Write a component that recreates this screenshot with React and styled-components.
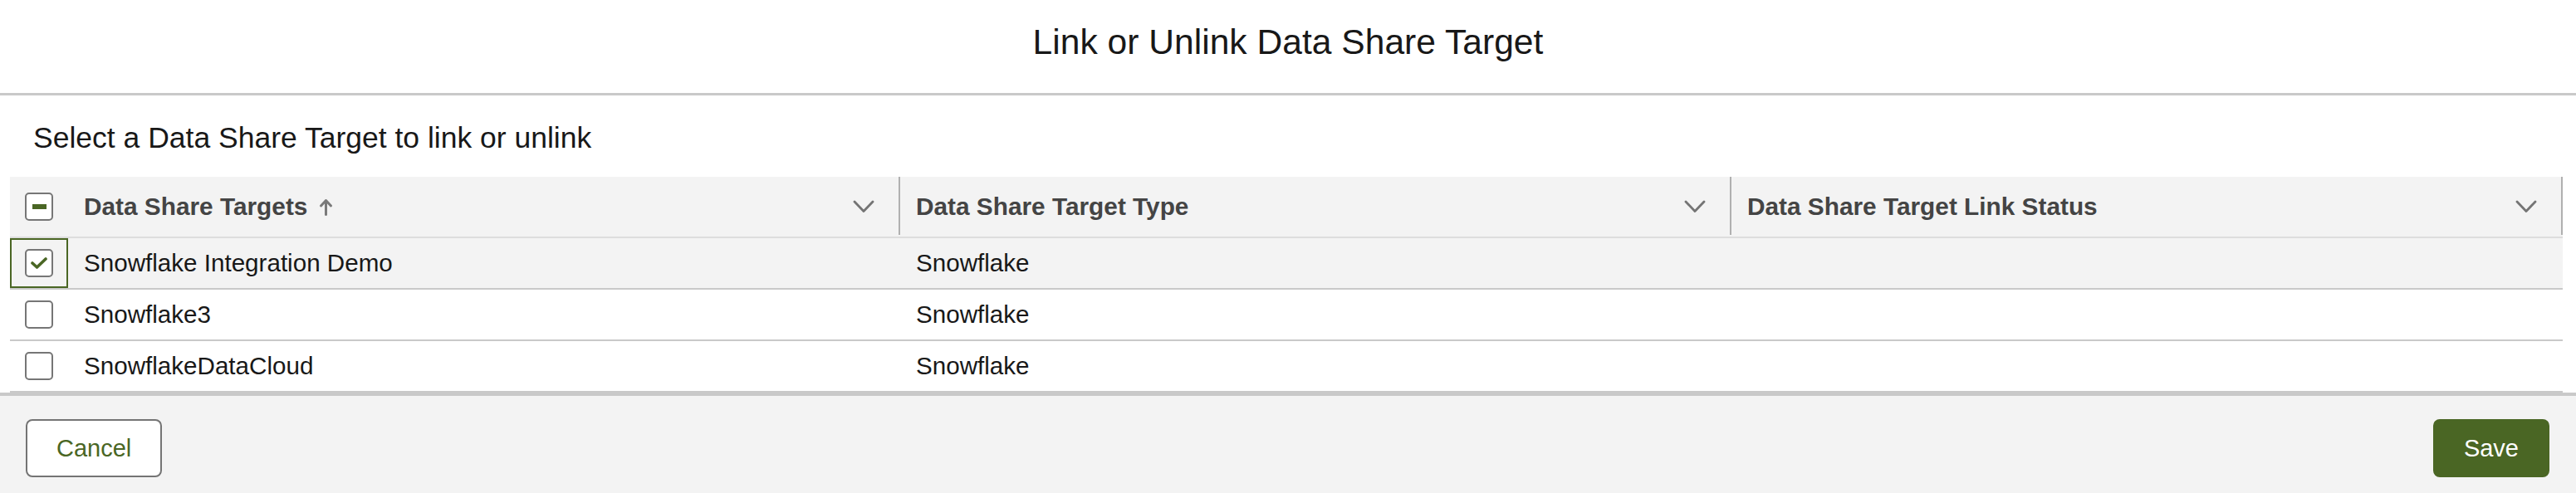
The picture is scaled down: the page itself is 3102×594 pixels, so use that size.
import React from "react";
import styled, { createGlobalStyle } from "styled-components";

const GlobalStyle = createGlobalStyle`
  html, body { margin: 0; padding: 0; background: #ffffff; }
  body { font-family: "Liberation Sans", Arial, sans-serif; color: #181818; }
  * { box-sizing: border-box; }
`;

const GREEN = "#4a6624";

const Modal = styled.div`
  width: 3102px;
  height: 594px;
  display: flex;
  flex-direction: column;
  background: #ffffff;
  overflow: hidden;
`;

const Header = styled.header`
  height: 115px;
  padding-top: 24px;
  border-bottom: 3px solid #c9c9c9;
  text-align: center;
`;

const Title = styled.h1`
  margin: 0;
  font-size: 42.6px;
  line-height: 52px;
  font-weight: 400;
  color: #181818;
`;

const Body = styled.section`
  padding: 29px 16px 0 12px;
  background: #ffffff;
`;

const Heading = styled.h2`
  margin: 0 0 25px 28px;
  font-size: 35.5px;
  line-height: 44px;
  font-weight: 400;
  color: #181818;
`;

const Grid = styled.div`
  display: grid;
  grid-template-columns: 70px 1002px 1001px 1001px;
  width: 3074px;
`;

const HeadRow = styled(Grid)`
  height: 74px;
  background: #f3f3f3;
  border-bottom: 2px solid #dddddd;
`;

const Row = styled(Grid)`
  height: 62px;
  background: ${(p) => (p.$selected ? "#f3f3f3" : "#ffffff")};
  border-bottom: 2px solid #c9c9c9;
`;

const CheckCell = styled.div`
  display: flex;
  align-items: center;
  justify-content: center;
  box-shadow: ${(p) => (p.$focused ? `inset 0 0 0 2px ${GREEN}` : "none")};
`;

const HeadCell = styled.div`
  position: relative;
  display: flex;
  align-items: center;
  padding: 0 31px 0 19px;
  font-size: 29.8px;
  font-weight: 700;
  color: #444444;
  white-space: nowrap;

  &::after {
    content: "";
    position: absolute;
    right: 0;
    top: 0;
    bottom: 2px;
    width: 2px;
    background: #b0b0b0;
  }
`;

const HeadLabel = styled.span`
  display: flex;
  align-items: center;
  gap: 13px;
  flex: 1;
`;

const Cell = styled.div`
  display: flex;
  align-items: center;
  padding-left: 19px;
  font-size: 29.6px;
  color: #181818;
  white-space: nowrap;
`;

const Box = styled.span`
  width: 34px;
  height: 34px;
  border: 2px solid #767676;
  border-radius: 5px;
  background: #ffffff;
  display: flex;
  align-items: center;
  justify-content: center;
`;

const Dash = styled.span`
  width: 17px;
  height: 6px;
  background: ${GREEN};
`;

const Footer = styled.footer`
  flex: 1;
  display: flex;
  justify-content: space-between;
  align-items: flex-start;
  padding: 28px 32px 0 31px;
  background: #f3f3f3;
  border-top: 4px solid #c9c9c9;
`;

const Button = styled.button`
  height: 70px;
  padding: 0 35px;
  border-radius: 8px;
  font-family: "Liberation Sans", Arial, sans-serif;
  font-size: 29px;
  line-height: 1;
  cursor: pointer;
  border: 2px solid ${(p) => (p.$brand ? GREEN : "#747474")};
  background: ${(p) => (p.$brand ? GREEN : "#ffffff")};
  color: ${(p) => (p.$brand ? "#ffffff" : GREEN)};
`;

const Checkbox = ({ state }) => (
  <Box>
    {state === "checked" && (
      <svg width="20" height="14" viewBox="0 0 20 14">
        <polyline
          points="2,7 7.5,12 18,2"
          fill="none"
          stroke={GREEN}
          strokeWidth="3.6"
          strokeLinecap="round"
          strokeLinejoin="round"
        />
      </svg>
    )}
    {state === "indeterminate" && <Dash />}
  </Box>
);

const Chevron = () => (
  <svg width="26" height="16" viewBox="0 0 26 16">
    <polyline
      points="2,2 13,13.5 24,2"
      fill="none"
      stroke="#747474"
      strokeWidth="2.8"
      strokeLinecap="round"
      strokeLinejoin="round"
    />
  </svg>
);

const SortArrow = () => (
  <svg width="19" height="21" viewBox="0 0 19 21">
    <g fill="none" stroke="#7a7a7a" strokeWidth="3" strokeLinecap="round" strokeLinejoin="round">
      <line x1="9.5" y1="3" x2="9.5" y2="19.5" />
      <polyline points="3.5,9 9.5,2.5 15.5,9" />
    </g>
  </svg>
);

const columns = [
  { label: "Data Share Targets", sorted: true },
  { label: "Data Share Target Type" },
  { label: "Data Share Target Link Status" },
];

const rows = [
  { name: "Snowflake Integration Demo", type: "Snowflake", status: "", checked: true },
  { name: "Snowflake3", type: "Snowflake", status: "" },
  { name: "SnowflakeDataCloud", type: "Snowflake", status: "" },
];

export default function App() {
  return (
    <>
      <GlobalStyle />
      <Modal>
        <Header>
          <Title>Link or Unlink Data Share Target</Title>
        </Header>
        <Body>
          <Heading>Select a Data Share Target to link or unlink</Heading>
          <HeadRow>
            <CheckCell>
              <Checkbox state="indeterminate" />
            </CheckCell>
            {columns.map((c) => (
              <HeadCell key={c.label}>
                <HeadLabel>
                  {c.label}
                  {c.sorted && <SortArrow />}
                </HeadLabel>
                <Chevron />
              </HeadCell>
            ))}
          </HeadRow>
          {rows.map((r) => (
            <Row key={r.name} $selected={r.checked}>
              <CheckCell $focused={r.checked}>
                <Checkbox state={r.checked ? "checked" : "none"} />
              </CheckCell>
              <Cell>{r.name}</Cell>
              <Cell>{r.type}</Cell>
              <Cell>{r.status}</Cell>
            </Row>
          ))}
        </Body>
        <Footer>
          <Button>Cancel</Button>
          <Button $brand>Save</Button>
        </Footer>
      </Modal>
    </>
  );
}
